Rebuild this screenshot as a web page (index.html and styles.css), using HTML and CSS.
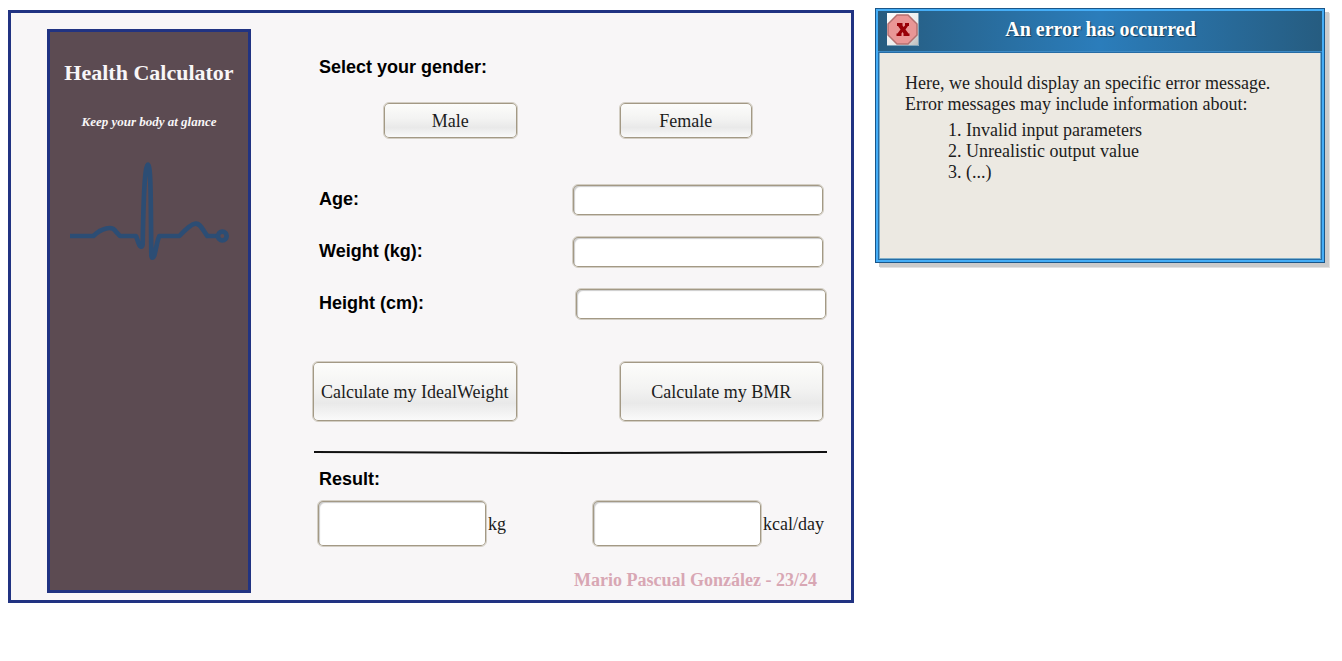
FILE: index.html
```html
<!DOCTYPE html>
<html lang="en">
<head>
<meta charset="utf-8">
<title>Health Calculator</title>
<link rel="stylesheet" href="styles.css">
</head>
<body>
<div class="page">
  <main class="app">
    <aside class="sidebar">
      <h1 class="brand">Health Calculator</h1>
      <p class="tagline">Keep your body at glance</p>
      <svg class="pulse" viewBox="0 0 540 330" aria-hidden="true">
        <path d="M33 243H103C127 219 159 211 170 229L183 243H231L239 265C243 278 250 278 251 268C253 160 256 29 267 29C277 29 275 180 277 300C278 312 283 309 286 301C292 280 294 257 301 243H361C383 220 397 207 409 206C424 204 430 223 445 243H476"/>
        <circle cx="490" cy="243" r="13"/>
      </svg>
    </aside>
    <form class="calculator">
      <h2 class="heading" id="gender">Select your gender:</h2>
      <div class="gender-row" role="group" aria-labelledby="gender">
        <button class="btn" type="button">Male</button>
        <button class="btn" type="button">Female</button>
      </div>
      <div class="fields">
        <div class="field"><label class="heading" for="age">Age:</label><input class="box" id="age" type="text"></div>
        <div class="field"><label class="heading" for="weight">Weight (kg):</label><input class="box" id="weight" type="text"></div>
        <div class="field field-wide"><label class="heading" for="height">Height (cm):</label><input class="box" id="height" type="text"></div>
      </div>
      <div class="action-row">
        <button class="btn btn-large" type="button">Calculate my IdealWeight</button>
        <button class="btn btn-large" type="button">Calculate my BMR</button>
      </div>
      <svg class="divider" viewBox="0 0 513 3" preserveAspectRatio="none" aria-hidden="true"><path d="M0 1L256 2L513 1"/></svg>
      <h2 class="heading">Result:</h2>
      <div class="result-row">
        <div class="result"><input class="box box-large" id="kg" type="text" readonly><label for="kg">kg</label></div>
        <div class="result"><input class="box box-large" id="kcal" type="text" readonly><label for="kcal">kcal/day</label></div>
      </div>
      <p class="author">Mario Pascual González - 23/24</p>
    </form>
  </main>
  <section class="dialog" role="alertdialog" aria-labelledby="dialog-title">
    <header class="dialog-header">
      <svg class="error-icon" viewBox="0 0 32 33" role="img" aria-label="Error">
        <defs><linearGradient id="tile" x1="0" y1="0" x2="1" y2="1"><stop offset="0" stop-color="#fff"/><stop offset=".6" stop-color="#ececec"/><stop offset="1" stop-color="#b9b9b9"/></linearGradient></defs>
        <rect width="32" height="33" fill="url(#tile)"/>
        <path d="M31.500 0V32.500H0" fill="none" stroke="#7fa3b9"/>
        <path d="M10 2H21L30 11V22L21 31H10L1 22V11Z" fill="#e99696" stroke="#b57070" stroke-width="1.500"/>
        <path d="M10 10H15.500V12.500L16.500 14L18 12.500V10H22V13H21L18.500 16.500L21.500 20.500H22.500V23H16.500V20.500L15.500 19L14.500 20.500V23H9.500V20.500H10.500L13.500 16.500L11 13H10Z" fill="#990008"/>
      </svg>
      <h2 class="dialog-title" id="dialog-title">An error has occurred</h2>
    </header>
    <div class="dialog-body">
      <p>Here, we should display an specific error message.<br>Error messages may include information about:</p>
      <ol>
        <li>Invalid input parameters</li>
        <li>Unrealistic output value</li>
        <li>(...)</li>
      </ol>
    </div>
  </section>
</div>
</body>
</html>
```
FILE: styles.css
```css
* { box-sizing: border-box; }

body {
  margin: 0;
  background: #fff;
  color: #1c1c1c;
  font: 18px/22px "Liberation Serif", serif;
}

h1, h2, p, ol { margin: 0; }

.page {
  display: grid;
  grid-template-columns: 846fr 450fr;
  align-items: start;
  gap: 21px;
  padding: 8px 17px 8px 8px;
}

.app {
  display: grid;
  grid-template-columns: 204px 1fr;
  margin-top: 2px;
  padding-left: 36px;
  border: 3px solid #213382;
  background: #f8f6f7;
}

.sidebar {
  margin: 16px 0 7px;
  padding-top: 29px;
  border: 3px solid #213382;
  background: #5c4b52;
  color: #f8f6f7;
  text-align: center;
}

.brand { font-size: 22px; line-height: 24px; }

.tagline {
  margin-top: 29px;
  font-size: 13px;
  line-height: 16px;
  font-style: italic;
  font-weight: bold;
}

.pulse {
  display: block;
  width: 180px;
  margin: 25px auto 0;
  fill: none;
  stroke: #2c4d74;
  stroke-width: 14px;
  stroke-linejoin: round;
}

.calculator {
  display: flex;
  flex-direction: column;
  padding: 43px 24px 9px 61px;
}

.heading {
  padding-left: 7px;
  color: #000;
  font: bold 18px/22px "Liberation Sans", sans-serif;
}

.gender-row, .action-row {
  display: grid;
  grid-template-columns: 1fr 1fr;
  gap: 101px;
}

.gender-row { margin: 24px 0 45px; padding: 0 74px 0 71px; }
.action-row { margin: 41px 0 29px; padding-right: 3px; }

.btn {
  height: 37px;
  padding: 0;
  border: 1px solid #d3cec4;
  border-radius: 6px;
  background: linear-gradient(#fdfdfb, #f3f3f2 45%, #e9e9e9 70%, #fbfbfb);
  box-shadow: inset 0 0 0 1px #a39985;
  color: #1c1c1c;
  font: inherit;
  white-space: nowrap;
}

.btn-large { height: 61px; }

.fields { display: grid; gap: 20px; }

.field {
  display: flex;
  align-items: center;
  justify-content: space-between;
  padding-right: 3px;
}

.field .heading { padding-bottom: 2px; }

.field-wide { padding-right: 0; }

.box {
  width: 252px;
  height: 32px;
  padding: 0 8px;
  border: 1px solid #d3cec4;
  border-radius: 6px;
  background: #fff;
  box-shadow: inset 0 0 0 1px #a39985, inset 2px 2px 1px #ccc;
  font: inherit;
}

.box-large { width: 170px; height: 47px; }

.divider {
  display: block;
  height: 3px;
  margin: 0 0 14px 2px;
  overflow: visible;
  fill: none;
  stroke: #111;
  stroke-width: 2px;
}

.result-row {
  display: flex;
  justify-content: space-between;
  margin: 10px 0 22px;
  padding: 0 3px 0 5px;
}

.result { display: flex; align-items: center; gap: 1px; }

.author {
  padding-right: 10px;
  color: #d8a7b4;
  font-weight: bold;
  text-align: right;
}

.dialog {
  border: 1px solid #1b5688;
  background: #45aef7;
  box-shadow: 4px 4px 0 #cbcbcb, 5px 5px 0 #e2e2e2;
  padding: 2px;
}

.dialog-header {
  display: grid;
  grid-template-columns: 32px 1fr 32px;
  align-items: center;
  height: 41px;
  padding: 0 8px 4px 9px;
  border-bottom: 1px solid #3d8ac4;
  background: linear-gradient(90deg, #265c80, #2b7dbb 50%, #265c80);
}

.error-icon { display: block; width: 32px; height: 33px; }

.dialog-title {
  color: #fff;
  font-size: 20px;
  line-height: 24px;
  text-align: center;
  text-shadow: 1px 1px 1px #123c5c;
}

.dialog-body {
  min-height: 208px;
  padding: 20px 24px 20px 26px;
  border: 1px solid #266ca5;
  background: #ece9e2;
  box-shadow: inset 0 -1px #7fb0cb, inset 1px 0 #7fb0cb, inset -1px 0 #7fb0cb;
  line-height: 21px;
}

.dialog-body ol { margin-top: 5px; padding-left: 61px; }
```
